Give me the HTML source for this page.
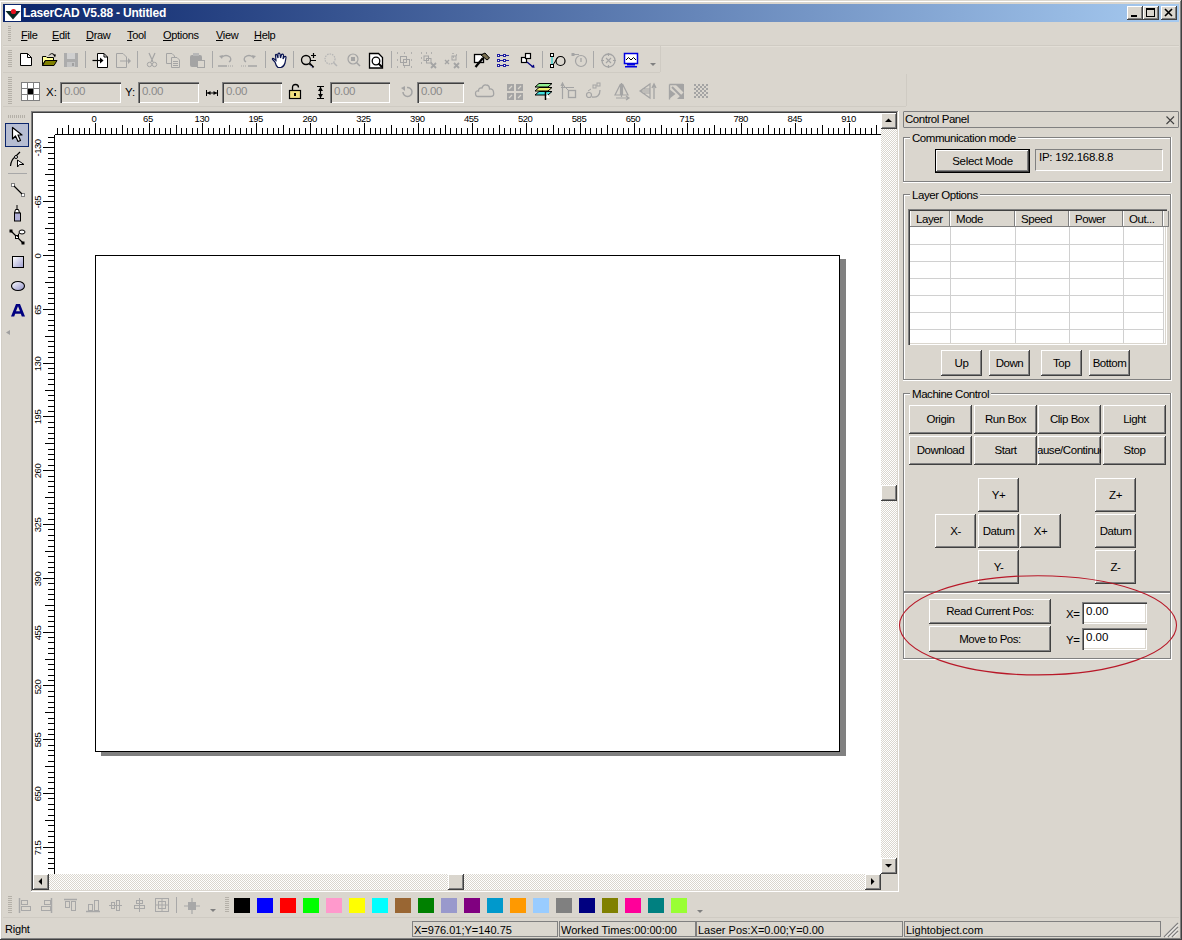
<!DOCTYPE html>
<html><head><meta charset="utf-8">
<style>
*{box-sizing:border-box;margin:0;padding:0}
html,body{width:1182px;height:940px;overflow:hidden;background:#DAD6CE;font-family:"Liberation Sans",sans-serif;font-size:11px;color:#000}
.a{position:absolute}
.ln{position:absolute}
.btn{position:absolute;background:#DAD6CE;box-shadow:inset -1px -1px #404040,inset 1px 1px #fff,inset -2px -2px #808080;text-align:center;white-space:nowrap;overflow:hidden;font-size:11.5px;letter-spacing:-0.45px}
.sunk{position:absolute;box-shadow:inset 1px 1px #808080,inset 2px 2px #404040,inset -1px -1px #fff,inset -2px -2px #DAD6CE}
.grp{position:absolute;border:1px solid #808080;box-shadow:inset 1px 1px #fff,1px 1px #fff}
.grp span{position:absolute;top:-7px;left:6px;background:#DAD6CE;padding:0 2px;white-space:nowrap}
.chk{background-color:#fff;background-image:repeating-conic-gradient(#DAD6CE 0 25%,#fff 0 50%);background-size:2px 2px}
.t{position:absolute;white-space:nowrap}
svg{position:absolute;overflow:visible}
</style></head><body>
<div class="ln" style="left:0px;top:0px;width:1182px;height:1px;background:#DCD8D0"></div>
<div class="ln" style="left:0px;top:1px;width:1181px;height:1px;background:#fff"></div>
<div class="ln" style="left:0px;top:1px;width:1px;height:939px;background:#fff"></div>
<div class="ln" style="left:1px;top:2px;width:1px;height:937px;background:#D2CEC6"></div>
<div class="ln" style="left:1180px;top:1px;width:1px;height:938px;background:#808080"></div>
<div class="ln" style="left:1181px;top:0px;width:1px;height:940px;background:#404040"></div>
<div class="ln" style="left:1px;top:938px;width:1180px;height:1px;background:#808080"></div>
<div class="ln" style="left:0px;top:939px;width:1182px;height:1px;background:#404040"></div>
<div class="a" style="left:3px;top:4px;width:1176px;height:18px;background:linear-gradient(to right,#0A246A,#A6CAF0)"></div>
<div class="t" style="left:23px;top:6px;color:#fff;font-weight:bold;font-size:12px;letter-spacing:-0.2px">LaserCAD V5.88 - Untitled</div>
<div class="a" style="left:8px;top:26px;width:3px;height:15px;background:repeating-linear-gradient(to bottom,#B4B0A8 0 1px,transparent 1px 2px)"></div><div class="t" style="left:21px;top:29px;line-height:13px;font-size:11px;letter-spacing:-0.3px"><u>F</u>ile</div><div class="t" style="left:52px;top:29px;line-height:13px;font-size:11px;letter-spacing:-0.3px"><u>E</u>dit</div><div class="t" style="left:86px;top:29px;line-height:13px;font-size:11px;letter-spacing:-0.3px"><u>D</u>raw</div><div class="t" style="left:127px;top:29px;line-height:13px;font-size:11px;letter-spacing:-0.3px"><u>T</u>ool</div><div class="t" style="left:163px;top:29px;line-height:13px;font-size:11px;letter-spacing:-0.3px"><u>O</u>ptions</div><div class="t" style="left:216px;top:29px;line-height:13px;font-size:11px;letter-spacing:-0.3px"><u>V</u>iew</div><div class="t" style="left:254px;top:29px;line-height:13px;font-size:11px;letter-spacing:-0.3px"><u>H</u>elp</div><div class="btn" style="left:1127px;top:6px;width:16px;height:14px"><svg width="16" height="14" style="left:0;top:0" shape-rendering="crispEdges"><rect x="4" y="9" width="6" height="2" fill="#000"/></svg></div><div class="btn" style="left:1143px;top:6px;width:16px;height:14px"><svg width="16" height="14" style="left:0;top:0" shape-rendering="crispEdges"><rect x="3.5" y="2.5" width="8" height="8" fill="none" stroke="#000"/><rect x="3" y="2" width="9" height="2" fill="#000"/></svg></div><div class="btn" style="left:1161px;top:6px;width:16px;height:14px"><svg width="16" height="14" style="left:0;top:0"><path d="M4 3 L11 10 M11 3 L4 10" stroke="#000" stroke-width="1.6"/></svg></div><svg width="16" height="16" style="left:5px;top:5px"><rect x="0" y="0" width="16" height="16" fill="#fff"/><path d="M0.5 6 L15.5 6 L8 14.5 Z" fill="#0C2A22"/><circle cx="8.5" cy="6.5" r="2.6" fill="#E8141E"/></svg><div class="ln" style="left:3px;top:45px;width:1176px;height:1px;background:#CFCBC3"></div><div class="ln" style="left:3px;top:46px;width:1176px;height:1px;background:#E2DED6"></div><div class="ln" style="left:3px;top:72px;width:657px;height:1px;background:#CFCBC3"></div><div class="ln" style="left:660px;top:46px;width:1px;height:26px;background:#CFCBC3"></div><div class="ln" style="left:3px;top:106px;width:903px;height:1px;background:#CFCBC3"></div><div class="ln" style="left:906px;top:74px;width:1px;height:32px;background:#CFCBC3"></div><div class="a" style="left:8px;top:50px;width:4px;height:18px;background:repeating-linear-gradient(to bottom,#B4B0A8 0 1px,transparent 1px 2px)"></div><div class="a" style="left:8px;top:77px;width:4px;height:28px;background:repeating-linear-gradient(to bottom,#B4B0A8 0 1px,transparent 1px 2px)"></div><div class="ln" style="left:85px;top:51px;width:1px;height:17px;background:#A8A8A8"></div><div class="ln" style="left:137px;top:51px;width:1px;height:17px;background:#A8A8A8"></div><div class="ln" style="left:212px;top:51px;width:1px;height:17px;background:#A8A8A8"></div><div class="ln" style="left:265px;top:51px;width:1px;height:17px;background:#A8A8A8"></div><div class="ln" style="left:293px;top:51px;width:1px;height:17px;background:#A8A8A8"></div><div class="ln" style="left:391px;top:51px;width:1px;height:17px;background:#A8A8A8"></div><div class="ln" style="left:466px;top:51px;width:1px;height:17px;background:#A8A8A8"></div><div class="ln" style="left:542px;top:51px;width:1px;height:17px;background:#A8A8A8"></div><div class="ln" style="left:593px;top:51px;width:1px;height:17px;background:#A8A8A8"></div>
<svg width="18" height="18" style="left:19px;top:52px"><path d="M1.5 1.5 H8.5 L12.5 5.5 V13.5 H1.5 Z" fill="#fff" stroke="#000"/><path d="M8.5 1.5 V5.5 H12.5" fill="none" stroke="#000"/></svg><svg width="18" height="18" style="left:41px;top:52px"><path d="M1.5 4.5 H5 L6 5.5 H12.5 V8.5 H4 L1.5 13.5 Z" fill="#FFFF99" stroke="#000"/><path d="M1.5 13.5 L4.5 8.5 H16 L13 13.5 Z" fill="#808000" stroke="#000"/><path d="M8 3.5 Q10.5 0 13.5 3" fill="none" stroke="#000"/><path d="M12 2.5 L15 2.5 L14 5.5 Z" fill="#000"/></svg><svg width="18" height="18" style="left:63px;top:52px"><rect x="1" y="1" width="14" height="14" fill="#ACACAC"/><rect x="4" y="1" width="8" height="6" fill="#D0D0D0"/><rect x="4" y="10" width="8" height="5" fill="#C4C4C4"/><rect x="9" y="11" width="2" height="3" fill="#A0A0A0"/></svg><svg width="18" height="18" style="left:92px;top:52px"><path d="M5.5 1.5 H12 L15.5 5 V15.5 H5.5 Z" fill="#fff" stroke="#000"/><path d="M12 1.5 V5 H15.5" fill="none" stroke="#000"/><path d="M0.5 8.5 H9" stroke="#000" stroke-width="1.2"/><path d="M8 5.5 L11.5 8.5 L8 11.5 Z" fill="#000"/></svg><svg width="18" height="18" style="left:115px;top:52px"><path d="M1.5 1.5 H8 L11.5 5 V15.5 H1.5 Z" fill="none" stroke="#A4A4A4"/><path d="M5 9 H14" stroke="#A4A4A4"/><path d="M13 6 L16 9 L13 12 Z" fill="#A4A4A4"/></svg><svg width="18" height="18" style="left:144px;top:52px"><path d="M5 1 L9 10 M11 1 L7 10" stroke="#A4A4A4" stroke-width="1.2" fill="none"/><circle cx="5.5" cy="12.5" r="2.2" fill="none" stroke="#A4A4A4"/><circle cx="10.5" cy="12.5" r="2.2" fill="none" stroke="#A4A4A4"/></svg><svg width="18" height="18" style="left:165px;top:52px"><path d="M1.5 1.5 H7 L9.5 4 V11.5 H1.5 Z" fill="none" stroke="#A4A4A4"/><path d="M6.5 5.5 H12 L14.5 8 V15.5 H6.5 Z" fill="#DAD6CE" stroke="#A4A4A4"/><path d="M8 9.5 H13 M8 11.5 H13 M8 13.5 H13" stroke="#A4A4A4"/></svg><svg width="18" height="18" style="left:189px;top:52px"><rect x="1" y="3" width="12" height="12" rx="2" fill="#A4A4A4"/><rect x="4" y="1" width="6" height="3" fill="#B8B8B8"/><rect x="8.5" y="8.5" width="7" height="7" fill="#DAD6CE" stroke="#A4A4A4"/></svg><svg width="18" height="18" style="left:217px;top:52px"><path d="M5 5 Q9 2 13 5 Q15 8 12 10" fill="none" stroke="#A4A4A4" stroke-width="1.3"/><path d="M2 4 L6 3 L5 7 Z" fill="#A4A4A4"/><path d="M1 14 H10" stroke="#A4A4A4" stroke-width="1.5"/><path d="M11 14 H17" stroke="#A4A4A4" stroke-dasharray="1 1"/></svg><svg width="18" height="18" style="left:240px;top:52px"><path d="M13 5 Q9 2 5 5 Q3 8 6 10" fill="none" stroke="#A4A4A4" stroke-width="1.3"/><path d="M16 4 L12 3 L13 7 Z" fill="#A4A4A4"/><path d="M8 14 H17" stroke="#A4A4A4" stroke-width="1.5"/><path d="M1 14 H7" stroke="#A4A4A4" stroke-dasharray="1 1"/></svg><svg width="18" height="18" style="left:271px;top:52px"><path d="M4 10 L1.5 7.5 Q1 6 2.5 6.5 L5 8.5 L4.5 3 Q5 1.5 6 3 L7 6 L7 1.8 Q8 0.5 9 2 L9.5 6 L10.5 2.5 Q11.5 1.5 12.5 3 L12 7 L13.5 4.5 Q15 4 15 5.5 L14 11 Q13 14.5 10 15.5 L7 15.5 Q5 14 4 10 Z" fill="#fff" stroke="#0A1450" stroke-width="1.2"/></svg><svg width="18" height="18" style="left:300px;top:52px"><circle cx="6" cy="8" r="4.5" fill="none" stroke="#000" stroke-width="1.3"/><path d="M9.5 11.5 L13.5 15.5" stroke="#000" stroke-width="2"/><path d="M11 3.5 H16 M13.5 1 V6 M11 8.5 H16" stroke="#000" stroke-width="1.2"/><path d="M10.5 13.5 L12.5 15.5" stroke="#A0A0E0" stroke-width="1"/></svg><svg width="18" height="18" style="left:323px;top:52px"><circle cx="7" cy="7" r="5" fill="none" stroke="#B4B4B4" stroke-width="1.2" stroke-dasharray="1.5 1"/><path d="M10.5 10.5 L14 14" stroke="#B4B4B4" stroke-width="1.5"/></svg><svg width="18" height="18" style="left:346px;top:52px"><circle cx="7" cy="7" r="5" fill="none" stroke="#A4A4A4" stroke-width="1.2"/><path d="M10.5 10.5 L14 14" stroke="#A4A4A4" stroke-width="1.5"/><path d="M5 5 H9 V9 H5 Z" fill="#A4A4A4"/></svg><svg width="18" height="18" style="left:368px;top:52px"><path d="M1.5 1.5 H10.5 L14.5 5.5 V16 H1.5 Z" fill="#fff" stroke="#000" stroke-width="1.3"/><circle cx="8" cy="9" r="3.8" fill="#fff" stroke="#000" stroke-width="1.3"/><path d="M10.5 11.5 L14 15" stroke="#000" stroke-width="2"/></svg><svg width="18" height="18" style="left:396px;top:52px"><path d="M1 1 h1 M8 1 h1 M15 1 h1 M1 8 h1 M15 8 h1 M1 15 h1 M8 15 h1 M15 15 h1" stroke="#A4A4A4" stroke-width="1.6"/><rect x="4.5" y="4.5" width="6" height="6" fill="none" stroke="#A4A4A4"/><rect x="7.5" y="7.5" width="6" height="6" fill="none" stroke="#A4A4A4"/></svg><svg width="18" height="18" style="left:420px;top:52px"><path d="M1 1 h1 M6 1 h1 M11 1 h1 M1 6 h1 M1 11 h1 M11 11 h1" stroke="#A4A4A4" stroke-width="1.5"/><rect x="4" y="4" width="4.5" height="4.5" fill="none" stroke="#A4A4A4"/><rect x="6.5" y="6.5" width="4.5" height="4.5" fill="none" stroke="#A4A4A4"/><path d="M11 11 L16 16 M16 11 L11 16" stroke="#A4A4A4" stroke-width="1.8"/></svg><svg width="18" height="18" style="left:444px;top:52px"><path d="M1 8 L5 12 M5 8 L1 12" stroke="#A4A4A4" stroke-width="1.4"/><path d="M9 1 v1 M12 3 h1 M9 5 h1" stroke="#A4A4A4" stroke-width="1.4"/><rect x="8" y="4" width="4" height="4" fill="none" stroke="#A4A4A4"/><path d="M10 11 L15 16 M15 11 L10 16" stroke="#A4A4A4" stroke-width="1.8"/></svg><svg width="18" height="18" style="left:473px;top:52px"><rect x="1.5" y="2.5" width="9" height="8" fill="#fff" stroke="#000" stroke-width="1.3"/><path d="M8 3 L12 1 L16.5 6 L14 8 Z" fill="#7A7050" stroke="#000"/><path d="M10 6 L2.5 15" stroke="#000" stroke-width="2.2"/></svg><svg width="18" height="18" style="left:496px;top:52px"><g fill="#fff" stroke="#2020A0" stroke-width="1"><rect x="1.5" y="2.5" width="2" height="2"/><rect x="7.5" y="2.5" width="2" height="2"/><rect x="1.5" y="7.5" width="2" height="2"/><rect x="7.5" y="7.5" width="2" height="2"/><rect x="1.5" y="12.5" width="2" height="2"/><rect x="7.5" y="12.5" width="2" height="2"/></g><path d="M4 3.5 H7 M10 3.5 H13 M4 8.5 H7 M10 8.5 H13 M4 13.5 H7 M10 13.5 H13" stroke="#2020A0" stroke-width="1"/></svg><svg width="18" height="18" style="left:520px;top:52px"><rect x="1.5" y="5.5" width="5" height="5" fill="#fff" stroke="#000" stroke-width="1.2"/><rect x="5.5" y="1.5" width="5" height="5" fill="#fff" stroke="#000" stroke-width="1.2"/><path d="M7 10 L13 15" stroke="#000080" stroke-width="1.3"/><path d="M14.5 16 L11 15 L14 12.5 Z" fill="#000080"/></svg><svg width="18" height="18" style="left:549px;top:52px"><path d="M3 3 V14" stroke="#40D0D0" stroke-width="1.5"/><rect x="1.5" y="1.5" width="3" height="3" fill="#fff" stroke="#000"/><rect x="1.5" y="12.5" width="3" height="3" fill="#fff" stroke="#000"/><path d="M4 13 L9 5" stroke="#000" stroke-width="1"/><circle cx="11.5" cy="9" r="4.5" fill="none" stroke="#000" stroke-width="1.2"/></svg><svg width="18" height="18" style="left:571px;top:52px"><path d="M1.5 2.5 H8" stroke="#A4A4A4"/><rect x="0.5" y="1" width="3" height="3" fill="#A4A4A4"/><circle cx="10" cy="9" r="5.5" fill="none" stroke="#A4A4A4" stroke-width="1.2"/><path d="M10 6 V10" stroke="#A4A4A4" stroke-width="1.3"/></svg><svg width="18" height="18" style="left:600px;top:52px"><circle cx="8.5" cy="8.5" r="6.5" fill="none" stroke="#A4A4A4" stroke-width="1.3"/><path d="M8.5 1 V4 M8.5 13 V16 M1 8.5 H4 M13 8.5 H16 M6 6 L11 11 M11 6 L6 11" stroke="#A4A4A4" stroke-width="1.1"/></svg><svg width="18" height="18" style="left:623px;top:52px"><rect x="1.5" y="1.5" width="13" height="10" fill="#fff" stroke="#0000E0" stroke-width="1.5"/><path d="M3 8 L5.5 5.5 L8 8 L10.5 5.5 L13 8" fill="none" stroke="#000" stroke-width="1"/><rect x="4" y="12" width="8" height="1.5" fill="#0000E0"/><rect x="2" y="14" width="12" height="1.5" fill="#0000E0"/></svg><svg width="8" height="6" style="left:649px;top:62px"><path d="M1 1 H7 L4 4 Z" fill="#808080"/></svg><svg width="19" height="19" style="left:21px;top:82px"><rect x="0.5" y="0.5" width="18" height="18" fill="#fff" stroke="#808080"/><path d="M6.5 0.5 V18.5 M12.5 0.5 V18.5 M0.5 6.5 H18.5 M0.5 12.5 H18.5" stroke="#808080"/><rect x="7" y="7" width="5" height="5" fill="#000"/></svg><div class="t" style="left:46px;top:85px;line-height:14px;font-size:11.5px">X:</div><div class="a" style="left:60px;top:82px;width:61px;height:21px;background:#DAD6CE;box-shadow:inset 1px 1px #808080,inset 2px 2px #404040,inset -1px -1px #fff,inset -2px -2px #DAD6CE"></div><div class="t" style="left:64px;top:84px;line-height:14px;font-size:11.5px;letter-spacing:-0.3px;color:#8A8A8A">0.00</div><div class="t" style="left:125px;top:85px;line-height:14px;font-size:11.5px">Y:</div><div class="a" style="left:138px;top:82px;width:61px;height:21px;background:#DAD6CE;box-shadow:inset 1px 1px #808080,inset 2px 2px #404040,inset -1px -1px #fff,inset -2px -2px #DAD6CE"></div><div class="t" style="left:142px;top:84px;line-height:14px;font-size:11.5px;letter-spacing:-0.3px;color:#8A8A8A">0.00</div><svg width="14" height="12" style="left:205px;top:87px"><path d="M1.5 3 V9 M12.5 3 V9 M2 6 H12" stroke="#000" stroke-width="1"/><path d="M2 6 L5.5 4 V8 Z M12 6 L8.5 4 V8 Z" fill="#000"/></svg><div class="a" style="left:222px;top:82px;width:60px;height:21px;background:#DAD6CE;box-shadow:inset 1px 1px #808080,inset 2px 2px #404040,inset -1px -1px #fff,inset -2px -2px #DAD6CE"></div><div class="t" style="left:226px;top:84px;line-height:14px;font-size:11.5px;letter-spacing:-0.3px;color:#8A8A8A">0.00</div><svg width="16" height="17" style="left:288px;top:83px"><path d="M4.5 7 V4.5 Q4.5 1.5 7.5 1.5 Q10.5 1.5 10.5 4.5" fill="none" stroke="#000" stroke-width="1.3"/><rect x="1.5" y="7.5" width="11" height="8" fill="#F0E080" stroke="#000" stroke-width="1.2"/><rect x="6" y="10" width="2" height="3" fill="#000"/></svg><svg width="11" height="15" style="left:315px;top:85px"><path d="M2 1.5 H9 M2 13.5 H9 M5.5 2 V13" stroke="#000" stroke-width="1.2"/><path d="M5.5 2 L3 6 H8 Z M5.5 13 L3 9 H8 Z" fill="#000"/></svg><div class="a" style="left:330px;top:82px;width:60px;height:21px;background:#DAD6CE;box-shadow:inset 1px 1px #808080,inset 2px 2px #404040,inset -1px -1px #fff,inset -2px -2px #DAD6CE"></div><div class="t" style="left:334px;top:84px;line-height:14px;font-size:11.5px;letter-spacing:-0.3px;color:#8A8A8A">0.00</div><svg width="13" height="13" style="left:400px;top:85px"><path d="M3 7 A4.5 4.5 0 1 0 7 2.5" fill="none" stroke="#A4A4A4" stroke-width="1.5"/><path d="M1 3 L5 1 L5 6 Z" fill="#A4A4A4"/></svg><div class="a" style="left:417px;top:82px;width:47px;height:21px;background:#DAD6CE;box-shadow:inset 1px 1px #808080,inset 2px 2px #404040,inset -1px -1px #fff,inset -2px -2px #DAD6CE"></div><div class="t" style="left:421px;top:84px;line-height:14px;font-size:11.5px;letter-spacing:-0.3px;color:#8A8A8A">0.00</div><svg width="20" height="17" style="left:475px;top:82px"><path d="M3 14.5 Q0.5 14.5 0.5 11.5 Q0.5 8.5 3.5 9 Q3.5 5.5 7 6 Q8 2.5 11 3 Q14.5 3 14.5 7 Q18 6.5 18.5 10 Q19.5 14.5 16 14.5 Z" fill="none" stroke="#A4A4A4" stroke-width="1.3"/></svg><svg width="18" height="18" style="left:506px;top:83px"><rect x="1" y="1" width="7" height="7" fill="#A4A4A4"/><rect x="10" y="1" width="7" height="7" fill="#A4A4A4"/><rect x="1" y="10" width="7" height="7" fill="#A4A4A4"/><rect x="10" y="10" width="7" height="7" fill="#A4A4A4"/><path d="M3 6 L6 3 M12 6 L15 3 M3 15 L6 12 M12 15 L15 12" stroke="#DAD6CE" stroke-width="1.2"/></svg><svg width="19" height="19" style="left:534px;top:82px"><path d="M1 5 L5 1.5 H18 L14 5 Z" fill="#90F090" stroke="#000"/><path d="M1 9 L5 5.5 H18 L14 9 Z" fill="#F0F070" stroke="#000"/><path d="M1 13 L5 9.5 H18 L14 13 Z" fill="#40E0E0" stroke="#000"/><path d="M11.5 10 V18" stroke="#000" stroke-width="1.5"/><path d="M12.5 11 L16 16 H12.5 Z" fill="#fff"/></svg><svg width="18" height="18" style="left:560px;top:82px"><path d="M2.5 1 V17 M1 4 L2.5 1 L4 4" fill="none" stroke="#A4A4A4" stroke-width="1.2"/><path d="M4 4 L9 9" stroke="#A4A4A4"/><rect x="8.5" y="8.5" width="7" height="7" fill="none" stroke="#A4A4A4" stroke-width="1.3"/><path d="M1 5.5 H14" stroke="#A4A4A4"/></svg><svg width="18" height="18" style="left:585px;top:82px"><circle cx="4" cy="13" r="2.5" fill="none" stroke="#A4A4A4" stroke-width="1.2"/><rect x="8" y="3" width="3" height="3" fill="none" stroke="#A4A4A4"/><rect x="12" y="1" width="3" height="3" fill="none" stroke="#A4A4A4"/><path d="M7 15 Q15 16 15 8" fill="none" stroke="#A4A4A4" stroke-width="1.3"/><path d="M3 9 L6 7" stroke="#A4A4A4"/></svg><svg width="18" height="18" style="left:614px;top:82px"><path d="M7.5 1 V15 M6.5 2 L1 13 H6.5 Z M8.5 2 L14 13 H8.5 Z" fill="none" stroke="#A4A4A4" stroke-width="1.2"/><path d="M2 16 H14 M12 14 L15 16 L12 18" fill="none" stroke="#A4A4A4" stroke-width="1.2"/></svg><svg width="18" height="18" style="left:639px;top:82px"><path d="M1 9 L11 2 V16 Z M1 9 H11 M3 7 H11 M3 11 H11" fill="none" stroke="#A4A4A4" stroke-width="1.2"/><path d="M15 3 V17 M13 6 L15 2 L17 6" fill="none" stroke="#A4A4A4" stroke-width="1.3"/></svg><svg width="18" height="18" style="left:668px;top:83px"><path d="M1.5 1.5 V16.5 M1.5 1.5 H15" stroke="#A4A4A4" stroke-width="1.3"/><path d="M7 1 H16 V10 Z" fill="#A4A4A4"/><path d="M1 6 L7.5 11 L1 16 Z" fill="#A4A4A4"/><path d="M4 4 L13 13" stroke="#A4A4A4" stroke-width="2"/><path d="M9 16 H16 V9 Z" fill="#A4A4A4"/></svg><svg width="18" height="18" style="left:693px;top:83px"><rect x="1" y="1" width="2" height="2" fill="#A4A4A4"/><rect x="1" y="5" width="2" height="2" fill="#A4A4A4"/><rect x="1" y="9" width="2" height="2" fill="#A4A4A4"/><rect x="1" y="13" width="2" height="2" fill="#A4A4A4"/><rect x="3" y="3" width="2" height="2" fill="#A4A4A4"/><rect x="3" y="7" width="2" height="2" fill="#A4A4A4"/><rect x="3" y="11" width="2" height="2" fill="#A4A4A4"/><rect x="5" y="1" width="2" height="2" fill="#A4A4A4"/><rect x="5" y="5" width="2" height="2" fill="#A4A4A4"/><rect x="5" y="9" width="2" height="2" fill="#A4A4A4"/><rect x="5" y="13" width="2" height="2" fill="#A4A4A4"/><rect x="7" y="3" width="2" height="2" fill="#A4A4A4"/><rect x="7" y="7" width="2" height="2" fill="#A4A4A4"/><rect x="7" y="11" width="2" height="2" fill="#A4A4A4"/><rect x="9" y="1" width="2" height="2" fill="#A4A4A4"/><rect x="9" y="5" width="2" height="2" fill="#A4A4A4"/><rect x="9" y="9" width="2" height="2" fill="#A4A4A4"/><rect x="9" y="13" width="2" height="2" fill="#A4A4A4"/><rect x="11" y="3" width="2" height="2" fill="#A4A4A4"/><rect x="11" y="7" width="2" height="2" fill="#A4A4A4"/><rect x="11" y="11" width="2" height="2" fill="#A4A4A4"/><rect x="13" y="1" width="2" height="2" fill="#A4A4A4"/><rect x="13" y="5" width="2" height="2" fill="#A4A4A4"/><rect x="13" y="9" width="2" height="2" fill="#A4A4A4"/><rect x="13" y="13" width="2" height="2" fill="#A4A4A4"/></svg>
<div class="a" style="left:8px;top:115px;width:18px;height:3px;background:repeating-linear-gradient(to right,#B4B0A8 0 1px,transparent 1px 2px)"></div><div class="a" style="left:5px;top:123px;width:24px;height:24px;background:#B6BDD2;border:1px solid #0A246A"></div><svg width="14" height="18" style="left:11px;top:126px"><path d="M1.5 1.5 V13 L4.5 10 L7 15.5 L9.5 14.5 L7 9 L11 9 Z" fill="#fff" stroke="#000" stroke-width="1.2" stroke-linejoin="round"/></svg><svg width="18" height="18" style="left:9px;top:151px"><path d="M1.5 15 Q2 9 6 6 L11 1" fill="none" stroke="#000" stroke-width="1.2"/><circle cx="7" cy="6" r="1.5" fill="#fff" stroke="#000"/><path d="M8.5 9 V16 L10.5 13.5 L15 13.5 Z" fill="#fff" stroke="#000"/></svg><div class="ln" style="left:8px;top:173px;width:19px;height:1px;background:#A8A8A8"></div><svg width="18" height="18" style="left:10px;top:182px"><rect x="1.5" y="1.5" width="3" height="3" fill="#fff" stroke="#808080"/><rect x="11.5" y="11.5" width="3" height="3" fill="#fff" stroke="#808080"/><path d="M4 4 L12 12" stroke="#000" stroke-width="1.1"/></svg><svg width="9" height="17" style="left:13px;top:205px"><path d="M4 0 V4" stroke="#000"/><path d="M2.5 4.5 H5.5 L6.5 8 H1.5 Z" fill="#fff" stroke="#000"/><rect x="1.5" y="8" width="6" height="8" fill="#B0B0D8" stroke="#000"/></svg><svg width="18" height="18" style="left:9px;top:229px"><path d="M2 2 L8 8 L14 14" stroke="#000" stroke-width="1.2"/><rect x="0.5" y="0.5" width="3" height="3" fill="#000"/><rect x="6.5" y="6.5" width="3" height="3" fill="#fff" stroke="#000"/><rect x="12.5" y="12.5" width="3" height="3" fill="#000"/><path d="M8 8 L11 3" stroke="#000"/><ellipse cx="13" cy="3" rx="3" ry="2" fill="#fff" stroke="#000"/></svg><div class="a" style="left:12px;top:256px;width:12px;height:12px;border:1px solid #000;background:linear-gradient(135deg,#fff,#A0A0D0)"></div><svg width="15" height="11" style="left:11px;top:281px"><ellipse cx="7" cy="5" rx="6.5" ry="4.5" fill="url(#eg)" stroke="#000" stroke-width="1.1"/><defs><linearGradient id="eg" x1="0" y1="0" x2="1" y2="1"><stop offset="0" stop-color="#fff"/><stop offset="1" stop-color="#9090C8"/></linearGradient></defs></svg><svg width="14" height="13" style="left:11px;top:304px"><path d="M0 12.5 L5 0 H9 L14 12.5 H10.8 L9.8 9.8 H4.2 L3.2 12.5 Z M5 7.3 H9 L7 2.3 Z" fill="#000080" fill-rule="evenodd"/></svg><svg width="5" height="5" style="left:6px;top:330px"><path d="M4 0 V5 L0 2.5 Z" fill="#A0A0A0"/></svg><div class="ln" style="left:3px;top:917px;width:1176px;height:1px;background:#CFCBC3"></div><div class="a" style="left:8px;top:896px;width:4px;height:17px;background:repeating-linear-gradient(to bottom,#B4B0A8 0 1px,transparent 1px 2px)"></div><svg width="16" height="16" style="left:18px;top:898px"><path d="M1.5 0 V15" stroke="#A8A8A8" stroke-width="1.5"/><rect x="3.5" y="2.5" width="6" height="4" fill="none" stroke="#A8A8A8"/><rect x="3.5" y="8.5" width="9" height="4" fill="none" stroke="#A8A8A8"/></svg><svg width="16" height="16" style="left:40px;top:898px"><path d="M11.5 0 V15" stroke="#A8A8A8" stroke-width="1.5"/><rect x="4.5" y="2.5" width="6" height="4" fill="none" stroke="#A8A8A8"/><rect x="1.5" y="8.5" width="9" height="4" fill="none" stroke="#A8A8A8"/></svg><svg width="16" height="16" style="left:64px;top:898px"><path d="M0 1.5 H13" stroke="#A8A8A8" stroke-width="1.5"/><rect x="1.5" y="3.5" width="4" height="6" fill="none" stroke="#A8A8A8"/><rect x="7.5" y="3.5" width="4" height="9" fill="none" stroke="#A8A8A8"/></svg><svg width="16" height="16" style="left:86px;top:898px"><path d="M0 13.5 H14" stroke="#A8A8A8" stroke-width="1.5"/><rect x="2.5" y="6.5" width="4" height="6" fill="none" stroke="#A8A8A8"/><rect x="8.5" y="2.5" width="4" height="10" fill="none" stroke="#A8A8A8"/></svg><svg width="16" height="16" style="left:109px;top:898px"><path d="M0 7.5 H13" stroke="#A8A8A8"/><rect x="2.5" y="4.5" width="3" height="6" fill="none" stroke="#A8A8A8"/><rect x="7.5" y="2.5" width="3" height="10" fill="none" stroke="#A8A8A8"/></svg><svg width="16" height="16" style="left:133px;top:898px"><path d="M6.5 0 V14" stroke="#A8A8A8"/><rect x="3.5" y="2.5" width="6" height="3" fill="none" stroke="#A8A8A8"/><rect x="1.5" y="7.5" width="10" height="3" fill="none" stroke="#A8A8A8"/></svg><svg width="16" height="16" style="left:155px;top:898px"><rect x="0.5" y="0.5" width="13" height="13" fill="none" stroke="#A8A8A8"/><path d="M0.5 7 H13.5 M7 0.5 V13.5" stroke="#A8A8A8"/><rect x="3.5" y="3.5" width="7" height="7" fill="none" stroke="#A8A8A8"/></svg><svg width="16" height="16" style="left:184px;top:898px"><path d="M8 0 V16 M0 8 H16" stroke="#A8A8A8" stroke-width="1.2"/><rect x="4" y="4" width="8" height="8" fill="#A8A8A8"/></svg><div class="ln" style="left:176px;top:897px;width:1px;height:16px;background:#A8A8A8"></div><svg width="7" height="4" style="left:210px;top:909px"><path d="M0 0 H6 L3 3 Z" fill="#808080"/></svg><div class="a" style="left:225px;top:897px;width:4px;height:16px;background:repeating-linear-gradient(to bottom,#B4B0A8 0 1px,transparent 1px 2px)"></div><div class="a" style="left:234px;top:898px;width:16px;height:15px;background:#000000"></div><div class="a" style="left:257px;top:898px;width:16px;height:15px;background:#0000FF"></div><div class="a" style="left:280px;top:898px;width:16px;height:15px;background:#FF0000"></div><div class="a" style="left:303px;top:898px;width:16px;height:15px;background:#00FF00"></div><div class="a" style="left:326px;top:898px;width:16px;height:15px;background:#FF99CC"></div><div class="a" style="left:349px;top:898px;width:16px;height:15px;background:#FFFF00"></div><div class="a" style="left:372px;top:898px;width:16px;height:15px;background:#00FFFF"></div><div class="a" style="left:395px;top:898px;width:16px;height:15px;background:#996633"></div><div class="a" style="left:418px;top:898px;width:16px;height:15px;background:#008000"></div><div class="a" style="left:441px;top:898px;width:16px;height:15px;background:#9999CC"></div><div class="a" style="left:464px;top:898px;width:16px;height:15px;background:#800080"></div><div class="a" style="left:487px;top:898px;width:16px;height:15px;background:#0099CC"></div><div class="a" style="left:510px;top:898px;width:16px;height:15px;background:#FF9900"></div><div class="a" style="left:533px;top:898px;width:16px;height:15px;background:#99CCFF"></div><div class="a" style="left:556px;top:898px;width:16px;height:15px;background:#808080"></div><div class="a" style="left:579px;top:898px;width:16px;height:15px;background:#000080"></div><div class="a" style="left:602px;top:898px;width:16px;height:15px;background:#808000"></div><div class="a" style="left:625px;top:898px;width:16px;height:15px;background:#FF0099"></div><div class="a" style="left:648px;top:898px;width:16px;height:15px;background:#008080"></div><div class="a" style="left:671px;top:898px;width:16px;height:15px;background:#99FF33"></div><svg width="7" height="4" style="left:697px;top:910px"><path d="M0 0 H6 L3 3 Z" fill="#808080"/></svg><div class="t" style="left:5px;top:923px;line-height:13px;font-size:11px;letter-spacing:-0.2px">Right</div><div class="a" style="left:412px;top:921px;width:146px;height:16px;border:1px solid #808080"></div><div class="t" style="left:414px;top:923px;line-height:14px;font-size:11px;letter-spacing:0px">X=976.01;Y=140.75</div><div class="a" style="left:559px;top:921px;width:137px;height:16px;border:1px solid #808080"></div><div class="t" style="left:561px;top:923px;line-height:14px;font-size:11px;letter-spacing:0px">Worked Times:00:00:00</div><div class="a" style="left:696px;top:921px;width:207px;height:16px;border:1px solid #808080"></div><div class="t" style="left:698px;top:923px;line-height:14px;font-size:11px;letter-spacing:0px">Laser Pos:X=0.00;Y=0.00</div><div class="a" style="left:904px;top:921px;width:257px;height:16px;border:1px solid #808080"></div><div class="t" style="left:906px;top:923px;line-height:14px;font-size:11px;letter-spacing:0px">Lightobject.com</div><svg width="16" height="16" style="left:1163px;top:922px"><path d="M15 1 L1 15 M15 5 L5 15 M15 9 L9 15" stroke="#808080" stroke-width="1.3"/><path d="M15 2.5 L2.5 15 M15 6.5 L6.5 15 M15 10.5 L10.5 15" stroke="#fff" stroke-width="0.8"/></svg>
<div class="ln" style="left:31px;top:111px;width:867px;height:1px;background:#808080"></div>
<div class="ln" style="left:31px;top:111px;width:1px;height:780px;background:#808080"></div>
<div class="ln" style="left:32px;top:112px;width:865px;height:1px;background:#404040"></div>
<div class="ln" style="left:32px;top:112px;width:1px;height:778px;background:#404040"></div>
<div class="ln" style="left:898px;top:111px;width:1px;height:781px;background:#fff"></div>
<div class="ln" style="left:31px;top:891px;width:868px;height:1px;background:#fff"></div>
<div class="a" style="left:33px;top:113px;width:848px;height:761px;background:#fff"></div>
<div class="a" style="left:101px;top:259px;width:745px;height:497px;background:#808080"></div>
<div class="a" style="left:95px;top:255px;width:745px;height:497px;background:#fff;border:1px solid #000"></div>
<svg width="1182" height="940" style="left:0;top:0" shape-rendering="crispEdges"><rect x="55" y="134" width="826" height="1" fill="#000"/><rect x="54" y="135" width="1" height="739" fill="#000"/><rect x="57" y="128" width="1" height="6" fill="#000"/><rect x="62" y="128" width="1" height="6" fill="#000"/><rect x="68" y="125" width="1" height="9" fill="#000"/><rect x="73" y="128" width="1" height="6" fill="#000"/><rect x="79" y="128" width="1" height="6" fill="#000"/><rect x="84" y="128" width="1" height="6" fill="#000"/><rect x="89" y="128" width="1" height="6" fill="#000"/><rect x="95" y="123" width="1" height="11" fill="#000"/><rect x="100" y="128" width="1" height="6" fill="#000"/><rect x="105" y="128" width="1" height="6" fill="#000"/><rect x="111" y="128" width="1" height="6" fill="#000"/><rect x="116" y="128" width="1" height="6" fill="#000"/><rect x="122" y="125" width="1" height="9" fill="#000"/><rect x="127" y="128" width="1" height="6" fill="#000"/><rect x="132" y="128" width="1" height="6" fill="#000"/><rect x="138" y="128" width="1" height="6" fill="#000"/><rect x="143" y="128" width="1" height="6" fill="#000"/><rect x="149" y="123" width="1" height="11" fill="#000"/><rect x="154" y="128" width="1" height="6" fill="#000"/><rect x="159" y="128" width="1" height="6" fill="#000"/><rect x="165" y="128" width="1" height="6" fill="#000"/><rect x="170" y="128" width="1" height="6" fill="#000"/><rect x="176" y="125" width="1" height="9" fill="#000"/><rect x="181" y="128" width="1" height="6" fill="#000"/><rect x="186" y="128" width="1" height="6" fill="#000"/><rect x="192" y="128" width="1" height="6" fill="#000"/><rect x="197" y="128" width="1" height="6" fill="#000"/><rect x="202" y="123" width="1" height="11" fill="#000"/><rect x="208" y="128" width="1" height="6" fill="#000"/><rect x="213" y="128" width="1" height="6" fill="#000"/><rect x="219" y="128" width="1" height="6" fill="#000"/><rect x="224" y="128" width="1" height="6" fill="#000"/><rect x="229" y="125" width="1" height="9" fill="#000"/><rect x="235" y="128" width="1" height="6" fill="#000"/><rect x="240" y="128" width="1" height="6" fill="#000"/><rect x="246" y="128" width="1" height="6" fill="#000"/><rect x="251" y="128" width="1" height="6" fill="#000"/><rect x="256" y="123" width="1" height="11" fill="#000"/><rect x="262" y="128" width="1" height="6" fill="#000"/><rect x="267" y="128" width="1" height="6" fill="#000"/><rect x="273" y="128" width="1" height="6" fill="#000"/><rect x="278" y="128" width="1" height="6" fill="#000"/><rect x="283" y="125" width="1" height="9" fill="#000"/><rect x="289" y="128" width="1" height="6" fill="#000"/><rect x="294" y="128" width="1" height="6" fill="#000"/><rect x="299" y="128" width="1" height="6" fill="#000"/><rect x="305" y="128" width="1" height="6" fill="#000"/><rect x="310" y="123" width="1" height="11" fill="#000"/><rect x="316" y="128" width="1" height="6" fill="#000"/><rect x="321" y="128" width="1" height="6" fill="#000"/><rect x="326" y="128" width="1" height="6" fill="#000"/><rect x="332" y="128" width="1" height="6" fill="#000"/><rect x="337" y="125" width="1" height="9" fill="#000"/><rect x="343" y="128" width="1" height="6" fill="#000"/><rect x="348" y="128" width="1" height="6" fill="#000"/><rect x="353" y="128" width="1" height="6" fill="#000"/><rect x="359" y="128" width="1" height="6" fill="#000"/><rect x="364" y="123" width="1" height="11" fill="#000"/><rect x="370" y="128" width="1" height="6" fill="#000"/><rect x="375" y="128" width="1" height="6" fill="#000"/><rect x="380" y="128" width="1" height="6" fill="#000"/><rect x="386" y="128" width="1" height="6" fill="#000"/><rect x="391" y="125" width="1" height="9" fill="#000"/><rect x="396" y="128" width="1" height="6" fill="#000"/><rect x="402" y="128" width="1" height="6" fill="#000"/><rect x="407" y="128" width="1" height="6" fill="#000"/><rect x="413" y="128" width="1" height="6" fill="#000"/><rect x="418" y="123" width="1" height="11" fill="#000"/><rect x="423" y="128" width="1" height="6" fill="#000"/><rect x="429" y="128" width="1" height="6" fill="#000"/><rect x="434" y="128" width="1" height="6" fill="#000"/><rect x="440" y="128" width="1" height="6" fill="#000"/><rect x="445" y="125" width="1" height="9" fill="#000"/><rect x="450" y="128" width="1" height="6" fill="#000"/><rect x="456" y="128" width="1" height="6" fill="#000"/><rect x="461" y="128" width="1" height="6" fill="#000"/><rect x="467" y="128" width="1" height="6" fill="#000"/><rect x="472" y="123" width="1" height="11" fill="#000"/><rect x="477" y="128" width="1" height="6" fill="#000"/><rect x="483" y="128" width="1" height="6" fill="#000"/><rect x="488" y="128" width="1" height="6" fill="#000"/><rect x="493" y="128" width="1" height="6" fill="#000"/><rect x="499" y="125" width="1" height="9" fill="#000"/><rect x="504" y="128" width="1" height="6" fill="#000"/><rect x="510" y="128" width="1" height="6" fill="#000"/><rect x="515" y="128" width="1" height="6" fill="#000"/><rect x="520" y="128" width="1" height="6" fill="#000"/><rect x="526" y="123" width="1" height="11" fill="#000"/><rect x="531" y="128" width="1" height="6" fill="#000"/><rect x="537" y="128" width="1" height="6" fill="#000"/><rect x="542" y="128" width="1" height="6" fill="#000"/><rect x="547" y="128" width="1" height="6" fill="#000"/><rect x="553" y="125" width="1" height="9" fill="#000"/><rect x="558" y="128" width="1" height="6" fill="#000"/><rect x="564" y="128" width="1" height="6" fill="#000"/><rect x="569" y="128" width="1" height="6" fill="#000"/><rect x="574" y="128" width="1" height="6" fill="#000"/><rect x="580" y="123" width="1" height="11" fill="#000"/><rect x="585" y="128" width="1" height="6" fill="#000"/><rect x="590" y="128" width="1" height="6" fill="#000"/><rect x="596" y="128" width="1" height="6" fill="#000"/><rect x="601" y="128" width="1" height="6" fill="#000"/><rect x="607" y="125" width="1" height="9" fill="#000"/><rect x="612" y="128" width="1" height="6" fill="#000"/><rect x="617" y="128" width="1" height="6" fill="#000"/><rect x="623" y="128" width="1" height="6" fill="#000"/><rect x="628" y="128" width="1" height="6" fill="#000"/><rect x="634" y="123" width="1" height="11" fill="#000"/><rect x="639" y="128" width="1" height="6" fill="#000"/><rect x="644" y="128" width="1" height="6" fill="#000"/><rect x="650" y="128" width="1" height="6" fill="#000"/><rect x="655" y="128" width="1" height="6" fill="#000"/><rect x="661" y="125" width="1" height="9" fill="#000"/><rect x="666" y="128" width="1" height="6" fill="#000"/><rect x="671" y="128" width="1" height="6" fill="#000"/><rect x="677" y="128" width="1" height="6" fill="#000"/><rect x="682" y="128" width="1" height="6" fill="#000"/><rect x="687" y="123" width="1" height="11" fill="#000"/><rect x="693" y="128" width="1" height="6" fill="#000"/><rect x="698" y="128" width="1" height="6" fill="#000"/><rect x="704" y="128" width="1" height="6" fill="#000"/><rect x="709" y="128" width="1" height="6" fill="#000"/><rect x="714" y="125" width="1" height="9" fill="#000"/><rect x="720" y="128" width="1" height="6" fill="#000"/><rect x="725" y="128" width="1" height="6" fill="#000"/><rect x="731" y="128" width="1" height="6" fill="#000"/><rect x="736" y="128" width="1" height="6" fill="#000"/><rect x="741" y="123" width="1" height="11" fill="#000"/><rect x="747" y="128" width="1" height="6" fill="#000"/><rect x="752" y="128" width="1" height="6" fill="#000"/><rect x="758" y="128" width="1" height="6" fill="#000"/><rect x="763" y="128" width="1" height="6" fill="#000"/><rect x="768" y="125" width="1" height="9" fill="#000"/><rect x="774" y="128" width="1" height="6" fill="#000"/><rect x="779" y="128" width="1" height="6" fill="#000"/><rect x="784" y="128" width="1" height="6" fill="#000"/><rect x="790" y="128" width="1" height="6" fill="#000"/><rect x="795" y="123" width="1" height="11" fill="#000"/><rect x="801" y="128" width="1" height="6" fill="#000"/><rect x="806" y="128" width="1" height="6" fill="#000"/><rect x="811" y="128" width="1" height="6" fill="#000"/><rect x="817" y="128" width="1" height="6" fill="#000"/><rect x="822" y="125" width="1" height="9" fill="#000"/><rect x="828" y="128" width="1" height="6" fill="#000"/><rect x="833" y="128" width="1" height="6" fill="#000"/><rect x="838" y="128" width="1" height="6" fill="#000"/><rect x="844" y="128" width="1" height="6" fill="#000"/><rect x="849" y="123" width="1" height="11" fill="#000"/><rect x="855" y="128" width="1" height="6" fill="#000"/><rect x="860" y="128" width="1" height="6" fill="#000"/><rect x="865" y="128" width="1" height="6" fill="#000"/><rect x="871" y="128" width="1" height="6" fill="#000"/><rect x="876" y="125" width="1" height="9" fill="#000"/><rect x="48" y="137" width="6" height="1" fill="#000"/><rect x="48" y="142" width="6" height="1" fill="#000"/><rect x="43" y="147" width="11" height="1" fill="#000"/><rect x="48" y="153" width="6" height="1" fill="#000"/><rect x="48" y="158" width="6" height="1" fill="#000"/><rect x="48" y="164" width="6" height="1" fill="#000"/><rect x="48" y="169" width="6" height="1" fill="#000"/><rect x="45" y="174" width="9" height="1" fill="#000"/><rect x="48" y="180" width="6" height="1" fill="#000"/><rect x="48" y="185" width="6" height="1" fill="#000"/><rect x="48" y="190" width="6" height="1" fill="#000"/><rect x="48" y="196" width="6" height="1" fill="#000"/><rect x="43" y="201" width="11" height="1" fill="#000"/><rect x="48" y="207" width="6" height="1" fill="#000"/><rect x="48" y="212" width="6" height="1" fill="#000"/><rect x="48" y="217" width="6" height="1" fill="#000"/><rect x="48" y="223" width="6" height="1" fill="#000"/><rect x="45" y="228" width="9" height="1" fill="#000"/><rect x="48" y="233" width="6" height="1" fill="#000"/><rect x="48" y="239" width="6" height="1" fill="#000"/><rect x="48" y="244" width="6" height="1" fill="#000"/><rect x="48" y="250" width="6" height="1" fill="#000"/><rect x="43" y="255" width="11" height="1" fill="#000"/><rect x="48" y="260" width="6" height="1" fill="#000"/><rect x="48" y="266" width="6" height="1" fill="#000"/><rect x="48" y="271" width="6" height="1" fill="#000"/><rect x="48" y="277" width="6" height="1" fill="#000"/><rect x="45" y="282" width="9" height="1" fill="#000"/><rect x="48" y="287" width="6" height="1" fill="#000"/><rect x="48" y="293" width="6" height="1" fill="#000"/><rect x="48" y="298" width="6" height="1" fill="#000"/><rect x="48" y="303" width="6" height="1" fill="#000"/><rect x="43" y="309" width="11" height="1" fill="#000"/><rect x="48" y="314" width="6" height="1" fill="#000"/><rect x="48" y="320" width="6" height="1" fill="#000"/><rect x="48" y="325" width="6" height="1" fill="#000"/><rect x="48" y="330" width="6" height="1" fill="#000"/><rect x="45" y="336" width="9" height="1" fill="#000"/><rect x="48" y="341" width="6" height="1" fill="#000"/><rect x="48" y="346" width="6" height="1" fill="#000"/><rect x="48" y="352" width="6" height="1" fill="#000"/><rect x="48" y="357" width="6" height="1" fill="#000"/><rect x="43" y="363" width="11" height="1" fill="#000"/><rect x="48" y="368" width="6" height="1" fill="#000"/><rect x="48" y="373" width="6" height="1" fill="#000"/><rect x="48" y="379" width="6" height="1" fill="#000"/><rect x="48" y="384" width="6" height="1" fill="#000"/><rect x="45" y="390" width="9" height="1" fill="#000"/><rect x="48" y="395" width="6" height="1" fill="#000"/><rect x="48" y="400" width="6" height="1" fill="#000"/><rect x="48" y="406" width="6" height="1" fill="#000"/><rect x="48" y="411" width="6" height="1" fill="#000"/><rect x="43" y="416" width="11" height="1" fill="#000"/><rect x="48" y="422" width="6" height="1" fill="#000"/><rect x="48" y="427" width="6" height="1" fill="#000"/><rect x="48" y="433" width="6" height="1" fill="#000"/><rect x="48" y="438" width="6" height="1" fill="#000"/><rect x="45" y="443" width="9" height="1" fill="#000"/><rect x="48" y="449" width="6" height="1" fill="#000"/><rect x="48" y="454" width="6" height="1" fill="#000"/><rect x="48" y="459" width="6" height="1" fill="#000"/><rect x="48" y="465" width="6" height="1" fill="#000"/><rect x="43" y="470" width="11" height="1" fill="#000"/><rect x="48" y="476" width="6" height="1" fill="#000"/><rect x="48" y="481" width="6" height="1" fill="#000"/><rect x="48" y="486" width="6" height="1" fill="#000"/><rect x="48" y="492" width="6" height="1" fill="#000"/><rect x="45" y="497" width="9" height="1" fill="#000"/><rect x="48" y="503" width="6" height="1" fill="#000"/><rect x="48" y="508" width="6" height="1" fill="#000"/><rect x="48" y="513" width="6" height="1" fill="#000"/><rect x="48" y="519" width="6" height="1" fill="#000"/><rect x="43" y="524" width="11" height="1" fill="#000"/><rect x="48" y="529" width="6" height="1" fill="#000"/><rect x="48" y="535" width="6" height="1" fill="#000"/><rect x="48" y="540" width="6" height="1" fill="#000"/><rect x="48" y="546" width="6" height="1" fill="#000"/><rect x="45" y="551" width="9" height="1" fill="#000"/><rect x="48" y="556" width="6" height="1" fill="#000"/><rect x="48" y="562" width="6" height="1" fill="#000"/><rect x="48" y="567" width="6" height="1" fill="#000"/><rect x="48" y="572" width="6" height="1" fill="#000"/><rect x="43" y="578" width="11" height="1" fill="#000"/><rect x="48" y="583" width="6" height="1" fill="#000"/><rect x="48" y="589" width="6" height="1" fill="#000"/><rect x="48" y="594" width="6" height="1" fill="#000"/><rect x="48" y="599" width="6" height="1" fill="#000"/><rect x="45" y="605" width="9" height="1" fill="#000"/><rect x="48" y="610" width="6" height="1" fill="#000"/><rect x="48" y="616" width="6" height="1" fill="#000"/><rect x="48" y="621" width="6" height="1" fill="#000"/><rect x="48" y="626" width="6" height="1" fill="#000"/><rect x="43" y="632" width="11" height="1" fill="#000"/><rect x="48" y="637" width="6" height="1" fill="#000"/><rect x="48" y="642" width="6" height="1" fill="#000"/><rect x="48" y="648" width="6" height="1" fill="#000"/><rect x="48" y="653" width="6" height="1" fill="#000"/><rect x="45" y="659" width="9" height="1" fill="#000"/><rect x="48" y="664" width="6" height="1" fill="#000"/><rect x="48" y="669" width="6" height="1" fill="#000"/><rect x="48" y="675" width="6" height="1" fill="#000"/><rect x="48" y="680" width="6" height="1" fill="#000"/><rect x="43" y="685" width="11" height="1" fill="#000"/><rect x="48" y="691" width="6" height="1" fill="#000"/><rect x="48" y="696" width="6" height="1" fill="#000"/><rect x="48" y="702" width="6" height="1" fill="#000"/><rect x="48" y="707" width="6" height="1" fill="#000"/><rect x="45" y="712" width="9" height="1" fill="#000"/><rect x="48" y="718" width="6" height="1" fill="#000"/><rect x="48" y="723" width="6" height="1" fill="#000"/><rect x="48" y="729" width="6" height="1" fill="#000"/><rect x="48" y="734" width="6" height="1" fill="#000"/><rect x="43" y="739" width="11" height="1" fill="#000"/><rect x="48" y="745" width="6" height="1" fill="#000"/><rect x="48" y="750" width="6" height="1" fill="#000"/><rect x="48" y="755" width="6" height="1" fill="#000"/><rect x="48" y="761" width="6" height="1" fill="#000"/><rect x="45" y="766" width="9" height="1" fill="#000"/><rect x="48" y="772" width="6" height="1" fill="#000"/><rect x="48" y="777" width="6" height="1" fill="#000"/><rect x="48" y="782" width="6" height="1" fill="#000"/><rect x="48" y="788" width="6" height="1" fill="#000"/><rect x="43" y="793" width="11" height="1" fill="#000"/><rect x="48" y="798" width="6" height="1" fill="#000"/><rect x="48" y="804" width="6" height="1" fill="#000"/><rect x="48" y="809" width="6" height="1" fill="#000"/><rect x="48" y="815" width="6" height="1" fill="#000"/><rect x="45" y="820" width="9" height="1" fill="#000"/><rect x="48" y="825" width="6" height="1" fill="#000"/><rect x="48" y="831" width="6" height="1" fill="#000"/><rect x="48" y="836" width="6" height="1" fill="#000"/><rect x="48" y="842" width="6" height="1" fill="#000"/><rect x="43" y="847" width="11" height="1" fill="#000"/><rect x="48" y="852" width="6" height="1" fill="#000"/><rect x="48" y="858" width="6" height="1" fill="#000"/><rect x="48" y="863" width="6" height="1" fill="#000"/><rect x="48" y="868" width="6" height="1" fill="#000"/></svg>
<div class="t" style="left:64.0px;top:113.5px;width:60px;text-align:center;font-size:9.5px;letter-spacing:-0.5px;line-height:10px">0</div><div class="t" style="left:117.9px;top:113.5px;width:60px;text-align:center;font-size:9.5px;letter-spacing:-0.5px;line-height:10px">65</div><div class="t" style="left:171.8px;top:113.5px;width:60px;text-align:center;font-size:9.5px;letter-spacing:-0.5px;line-height:10px">130</div><div class="t" style="left:225.7px;top:113.5px;width:60px;text-align:center;font-size:9.5px;letter-spacing:-0.5px;line-height:10px">195</div><div class="t" style="left:279.6px;top:113.5px;width:60px;text-align:center;font-size:9.5px;letter-spacing:-0.5px;line-height:10px">260</div><div class="t" style="left:333.4px;top:113.5px;width:60px;text-align:center;font-size:9.5px;letter-spacing:-0.5px;line-height:10px">325</div><div class="t" style="left:387.3px;top:113.5px;width:60px;text-align:center;font-size:9.5px;letter-spacing:-0.5px;line-height:10px">390</div><div class="t" style="left:441.2px;top:113.5px;width:60px;text-align:center;font-size:9.5px;letter-spacing:-0.5px;line-height:10px">455</div><div class="t" style="left:495.1px;top:113.5px;width:60px;text-align:center;font-size:9.5px;letter-spacing:-0.5px;line-height:10px">520</div><div class="t" style="left:549.0px;top:113.5px;width:60px;text-align:center;font-size:9.5px;letter-spacing:-0.5px;line-height:10px">585</div><div class="t" style="left:602.9px;top:113.5px;width:60px;text-align:center;font-size:9.5px;letter-spacing:-0.5px;line-height:10px">650</div><div class="t" style="left:656.8px;top:113.5px;width:60px;text-align:center;font-size:9.5px;letter-spacing:-0.5px;line-height:10px">715</div><div class="t" style="left:710.7px;top:113.5px;width:60px;text-align:center;font-size:9.5px;letter-spacing:-0.5px;line-height:10px">780</div><div class="t" style="left:764.6px;top:113.5px;width:60px;text-align:center;font-size:9.5px;letter-spacing:-0.5px;line-height:10px">845</div><div class="t" style="left:818.5px;top:113.5px;width:60px;text-align:center;font-size:9.5px;letter-spacing:-0.5px;line-height:10px">910</div><div class="t" style="left:7.5px;top:143.4px;width:60px;height:10px;text-align:center;font-size:9.5px;letter-spacing:-0.5px;line-height:10px;transform:rotate(-90deg)">-130</div><div class="t" style="left:7.5px;top:197.2px;width:60px;height:10px;text-align:center;font-size:9.5px;letter-spacing:-0.5px;line-height:10px;transform:rotate(-90deg)">-65</div><div class="t" style="left:7.5px;top:251.0px;width:60px;height:10px;text-align:center;font-size:9.5px;letter-spacing:-0.5px;line-height:10px;transform:rotate(-90deg)">0</div><div class="t" style="left:7.5px;top:304.8px;width:60px;height:10px;text-align:center;font-size:9.5px;letter-spacing:-0.5px;line-height:10px;transform:rotate(-90deg)">65</div><div class="t" style="left:7.5px;top:358.6px;width:60px;height:10px;text-align:center;font-size:9.5px;letter-spacing:-0.5px;line-height:10px;transform:rotate(-90deg)">130</div><div class="t" style="left:7.5px;top:412.4px;width:60px;height:10px;text-align:center;font-size:9.5px;letter-spacing:-0.5px;line-height:10px;transform:rotate(-90deg)">195</div><div class="t" style="left:7.5px;top:466.2px;width:60px;height:10px;text-align:center;font-size:9.5px;letter-spacing:-0.5px;line-height:10px;transform:rotate(-90deg)">260</div><div class="t" style="left:7.5px;top:520.0px;width:60px;height:10px;text-align:center;font-size:9.5px;letter-spacing:-0.5px;line-height:10px;transform:rotate(-90deg)">325</div><div class="t" style="left:7.5px;top:573.9px;width:60px;height:10px;text-align:center;font-size:9.5px;letter-spacing:-0.5px;line-height:10px;transform:rotate(-90deg)">390</div><div class="t" style="left:7.5px;top:627.7px;width:60px;height:10px;text-align:center;font-size:9.5px;letter-spacing:-0.5px;line-height:10px;transform:rotate(-90deg)">455</div><div class="t" style="left:7.5px;top:681.5px;width:60px;height:10px;text-align:center;font-size:9.5px;letter-spacing:-0.5px;line-height:10px;transform:rotate(-90deg)">520</div><div class="t" style="left:7.5px;top:735.3px;width:60px;height:10px;text-align:center;font-size:9.5px;letter-spacing:-0.5px;line-height:10px;transform:rotate(-90deg)">585</div><div class="t" style="left:7.5px;top:789.1px;width:60px;height:10px;text-align:center;font-size:9.5px;letter-spacing:-0.5px;line-height:10px;transform:rotate(-90deg)">650</div><div class="t" style="left:7.5px;top:842.9px;width:60px;height:10px;text-align:center;font-size:9.5px;letter-spacing:-0.5px;line-height:10px;transform:rotate(-90deg)">715</div>
<div class="a chk" style="left:881px;top:113px;width:16px;height:761px"></div>
<div class="a chk" style="left:33px;top:874px;width:848px;height:16px"></div>
<div class="a" style="left:881px;top:874px;width:16px;height:16px;background:#DAD6CE"></div>
<div class="btn" style="left:881px;top:113px;width:16px;height:16px;"><svg width="16" height="16" style="left:0;top:0"><polygon points="4,9 11,9 7.5,5.5" fill="#000"/></svg></div>
<div class="btn" style="left:881px;top:858px;width:16px;height:16px;"><svg width="16" height="16" style="left:0;top:0"><polygon points="4,6 11,6 7.5,9.5" fill="#000"/></svg></div>
<div class="btn" style="left:881px;top:485px;width:16px;height:16px;"></div>
<div class="btn" style="left:33px;top:874px;width:16px;height:16px;"><svg width="16" height="16" style="left:0;top:0"><polygon points="9,4 9,11 5.5,7.5" fill="#000"/></svg></div>
<div class="btn" style="left:865px;top:874px;width:16px;height:16px;"><svg width="16" height="16" style="left:0;top:0"><polygon points="6,4 6,11 9.5,7.5" fill="#000"/></svg></div>
<div class="btn" style="left:448px;top:874px;width:16px;height:16px;"></div>
<div class="a" style="left:903px;top:111px;width:276px;height:17px;border:1px solid #808080;border-radius:1px"></div><div class="t" style="left:905px;top:113px;line-height:13px;font-size:11.5px;letter-spacing:-0.45px">Control Panel</div><svg width="10" height="10" style="left:1166px;top:115px" shape-rendering="crispEdges"><path d="M0.5 1.5 L8 9 M8 1.5 L0.5 9" stroke="#404040" stroke-width="1.1" fill="none" shape-rendering="geometricPrecision"/></svg><div class="ln" style="left:903px;top:137px;width:268px;height:1px;background:#808080"></div><div class="ln" style="left:903px;top:137px;width:1px;height:45px;background:#808080"></div><div class="ln" style="left:1170px;top:137px;width:1px;height:45px;background:#808080"></div><div class="ln" style="left:903px;top:181px;width:268px;height:1px;background:#808080"></div><div class="ln" style="left:904px;top:138px;width:266px;height:1px;background:#fff"></div><div class="ln" style="left:904px;top:138px;width:1px;height:43px;background:#fff"></div><div class="ln" style="left:1171px;top:137px;width:1px;height:46px;background:#fff"></div><div class="ln" style="left:903px;top:182px;width:269px;height:1px;background:#fff"></div><div class="t" style="left:910px;top:132px;padding:0 2px;background:#DAD6CE;line-height:13px;font-size:11.5px;letter-spacing:-0.45px">Communication mode</div><div class="a" style="left:935px;top:149px;width:95px;height:24px;border:1px solid #000;background:#DAD6CE;box-shadow:inset -1px -1px #404040,inset 1px 1px #fff,inset -2px -2px #808080"></div><div class="t" style="left:935px;top:150px;width:95px;line-height:23px;text-align:center;font-size:11.5px;letter-spacing:-0.3px">Select Mode</div><div class="a" style="left:1035px;top:149px;width:128px;height:22px;border-top:1px solid #808080;border-left:1px solid #808080;border-right:1px solid #fff;border-bottom:1px solid #fff"></div><div class="t" style="left:1039px;top:151px;line-height:13px;font-size:11.5px;letter-spacing:-0.25px">IP: 192.168.8.8</div><div class="ln" style="left:903px;top:194px;width:268px;height:1px;background:#808080"></div><div class="ln" style="left:903px;top:194px;width:1px;height:186px;background:#808080"></div><div class="ln" style="left:1170px;top:194px;width:1px;height:186px;background:#808080"></div><div class="ln" style="left:903px;top:379px;width:268px;height:1px;background:#808080"></div><div class="ln" style="left:904px;top:195px;width:266px;height:1px;background:#fff"></div><div class="ln" style="left:904px;top:195px;width:1px;height:184px;background:#fff"></div><div class="ln" style="left:1171px;top:194px;width:1px;height:187px;background:#fff"></div><div class="ln" style="left:903px;top:380px;width:269px;height:1px;background:#fff"></div><div class="t" style="left:910px;top:189px;padding:0 2px;background:#DAD6CE;line-height:13px;font-size:11.5px;letter-spacing:-0.45px">Layer Options</div><div class="a" style="left:908px;top:209px;width:259px;height:136px;background:#fff;box-shadow:inset 1px 1px #808080,inset 2px 2px #404040,inset -1px -1px #fff,inset -2px -2px #DAD6CE"></div><div class="a" style="left:910px;top:211px;width:40px;height:16px;background:#DAD6CE;box-shadow:inset -1px -1px #808080,inset 1px 0 #fff;padding-left:6px;line-height:17px;font-size:11.5px;letter-spacing:-0.45px;white-space:nowrap;overflow:hidden">Layer</div><div class="a" style="left:950px;top:211px;width:65px;height:16px;background:#DAD6CE;box-shadow:inset -1px -1px #808080,inset 1px 0 #fff;padding-left:6px;line-height:17px;font-size:11.5px;letter-spacing:-0.45px;white-space:nowrap;overflow:hidden">Mode</div><div class="a" style="left:1015px;top:211px;width:54px;height:16px;background:#DAD6CE;box-shadow:inset -1px -1px #808080,inset 1px 0 #fff;padding-left:6px;line-height:17px;font-size:11.5px;letter-spacing:-0.45px;white-space:nowrap;overflow:hidden">Speed</div><div class="a" style="left:1069px;top:211px;width:54px;height:16px;background:#DAD6CE;box-shadow:inset -1px -1px #808080,inset 1px 0 #fff;padding-left:6px;line-height:17px;font-size:11.5px;letter-spacing:-0.45px;white-space:nowrap;overflow:hidden">Power</div><div class="a" style="left:1123px;top:211px;width:40px;height:16px;background:#DAD6CE;box-shadow:inset -1px -1px #808080,inset 1px 0 #fff;padding-left:6px;line-height:17px;font-size:11.5px;letter-spacing:-0.45px;white-space:nowrap;overflow:hidden">Out...</div><div class="a" style="left:1163px;top:211px;width:3px;height:16px;background:#DAD6CE;box-shadow:inset -1px -1px #808080,inset 1px 0 #fff;padding-left:6px;line-height:17px;font-size:11.5px;letter-spacing:-0.45px;white-space:nowrap;overflow:hidden"></div><div class="ln" style="left:950px;top:227px;width:1px;height:116px;background:#D0D0D0"></div><div class="ln" style="left:1015px;top:227px;width:1px;height:116px;background:#D0D0D0"></div><div class="ln" style="left:1069px;top:227px;width:1px;height:116px;background:#D0D0D0"></div><div class="ln" style="left:1123px;top:227px;width:1px;height:116px;background:#D0D0D0"></div><div class="ln" style="left:1163px;top:227px;width:1px;height:116px;background:#D0D0D0"></div><div class="ln" style="left:910px;top:244px;width:254px;height:1px;background:#D0D0D0"></div><div class="ln" style="left:910px;top:261px;width:254px;height:1px;background:#D0D0D0"></div><div class="ln" style="left:910px;top:278px;width:254px;height:1px;background:#D0D0D0"></div><div class="ln" style="left:910px;top:295px;width:254px;height:1px;background:#D0D0D0"></div><div class="ln" style="left:910px;top:312px;width:254px;height:1px;background:#D0D0D0"></div><div class="ln" style="left:910px;top:329px;width:254px;height:1px;background:#D0D0D0"></div><div class="btn" style="left:941px;top:350px;width:41px;height:26px;line-height:26px;">Up</div><div class="btn" style="left:989px;top:350px;width:41px;height:26px;line-height:26px;">Down</div><div class="btn" style="left:1041px;top:350px;width:41px;height:26px;line-height:26px;">Top</div><div class="btn" style="left:1089px;top:350px;width:41px;height:26px;line-height:26px;">Bottom</div><div class="ln" style="left:903px;top:393px;width:268px;height:1px;background:#808080"></div><div class="ln" style="left:903px;top:393px;width:1px;height:199px;background:#808080"></div><div class="ln" style="left:1170px;top:393px;width:1px;height:199px;background:#808080"></div><div class="ln" style="left:903px;top:591px;width:268px;height:1px;background:#808080"></div><div class="ln" style="left:904px;top:394px;width:266px;height:1px;background:#fff"></div><div class="ln" style="left:904px;top:394px;width:1px;height:197px;background:#fff"></div><div class="ln" style="left:1171px;top:393px;width:1px;height:200px;background:#fff"></div><div class="ln" style="left:903px;top:592px;width:269px;height:1px;background:#fff"></div><div class="t" style="left:910px;top:388px;padding:0 2px;background:#DAD6CE;line-height:13px;font-size:11.5px;letter-spacing:-0.45px">Machine Control</div><div class="btn" style="left:909px;top:405px;width:63px;height:29px;line-height:29px;">Origin</div><div class="btn" style="left:974px;top:405px;width:63px;height:29px;line-height:29px;">Run Box</div><div class="btn" style="left:1038px;top:405px;width:63px;height:29px;line-height:29px;">Clip Box</div><div class="btn" style="left:1103px;top:405px;width:63px;height:29px;line-height:29px;">Light</div><div class="btn" style="left:909px;top:436px;width:63px;height:29px;line-height:29px;">Download</div><div class="btn" style="left:974px;top:436px;width:63px;height:29px;line-height:29px;">Start</div><div class="btn" style="left:1038px;top:436px;width:63px;height:29px;line-height:29px;"><span style="position:absolute;left:50%;top:0;transform:translateX(calc(-50% - 2px))">Pause/Continue</span></div><div class="btn" style="left:1103px;top:436px;width:63px;height:29px;line-height:29px;">Stop</div><div class="btn" style="left:978px;top:478px;width:41px;height:34px;line-height:34px;">Y+</div><div class="btn" style="left:935px;top:514px;width:41px;height:34px;line-height:34px;">X-</div><div class="btn" style="left:978px;top:514px;width:41px;height:34px;line-height:34px;">Datum</div><div class="btn" style="left:1020px;top:514px;width:41px;height:34px;line-height:34px;">X+</div><div class="btn" style="left:978px;top:550px;width:41px;height:34px;line-height:34px;">Y-</div><div class="btn" style="left:1095px;top:478px;width:41px;height:34px;line-height:34px;">Z+</div><div class="btn" style="left:1095px;top:514px;width:41px;height:34px;line-height:34px;">Datum</div><div class="btn" style="left:1095px;top:550px;width:41px;height:34px;line-height:34px;">Z-</div><div class="ln" style="left:903px;top:592px;width:268px;height:1px;background:#808080"></div><div class="ln" style="left:903px;top:592px;width:1px;height:67px;background:#808080"></div><div class="ln" style="left:1170px;top:592px;width:1px;height:67px;background:#808080"></div><div class="ln" style="left:903px;top:658px;width:268px;height:1px;background:#808080"></div><div class="ln" style="left:904px;top:593px;width:266px;height:1px;background:#fff"></div><div class="ln" style="left:904px;top:593px;width:1px;height:65px;background:#fff"></div><div class="ln" style="left:1171px;top:592px;width:1px;height:68px;background:#fff"></div><div class="ln" style="left:903px;top:659px;width:269px;height:1px;background:#fff"></div><div class="btn" style="left:929px;top:599px;width:122px;height:25px;line-height:25px;">Read Current Pos:</div><div class="btn" style="left:929px;top:626px;width:122px;height:26px;line-height:26px;">Move to Pos:</div><div class="t" style="left:1066px;top:608px;line-height:13px;font-size:11.5px;letter-spacing:-0.3px">X=</div><div class="t" style="left:1066px;top:634px;line-height:13px;font-size:11.5px;letter-spacing:-0.3px">Y=</div><div class="a" style="left:1082px;top:602px;width:65px;height:22px;background:#fff;box-shadow:inset 1px 1px #808080,inset 2px 2px #404040,inset -1px -1px #fff,inset -2px -2px #DAD6CE"></div><div class="a" style="left:1082px;top:628px;width:65px;height:22px;background:#fff;box-shadow:inset 1px 1px #808080,inset 2px 2px #404040,inset -1px -1px #fff,inset -2px -2px #DAD6CE"></div><div class="t" style="left:1086px;top:605px;line-height:13px;font-size:11.5px">0.00</div><div class="t" style="left:1086px;top:631px;line-height:13px;font-size:11.5px">0.00</div><svg width="1182" height="940" style="left:0;top:0"><ellipse cx="1038" cy="625.3" rx="138.5" ry="49.6" fill="none" stroke="#B81828" stroke-width="1.1"/></svg>
</body></html>
